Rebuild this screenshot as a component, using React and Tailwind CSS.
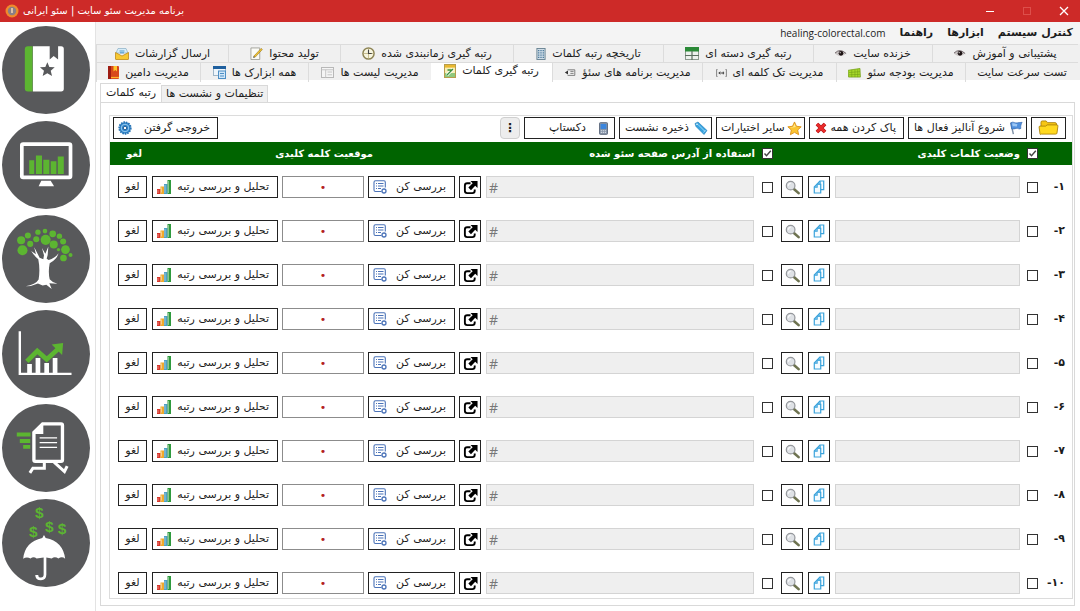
import { useState } from 'react';

const rows = ['۱', '۲', '۳', '۴', '۵', '۶', '۷', '۸', '۹', '۱۰'];

const FlagIcon = () => (
  <svg viewBox="0 0 16 16" className="size-[14px] shrink-0">
    <path d="M2 2l3 13" stroke="#7d8fa6" strokeWidth="1.6" />
    <path d="M2 2c3-2 5 1 8 0 2-.5 3 0 5-.5-1 2-2 4-1.500 7-2 1.500-3-.5-5.500 0-2 .5-3 1-5 .5z" fill="#4f8fdc" stroke="#2d62ad" strokeWidth=".7" />
    <path d="M3.500 3c2-1 4 1 6 .3l-.5 3c-2 .3-3-.5-4.700 0z" fill="#9cc7f5" />
  </svg>
);

const CrossIcon = () => (
  <svg viewBox="0 0 12 12" className="size-[12px] shrink-0">
    <path d="M2 2l8 8M10 2l-8 8" stroke="#a30f12" strokeWidth="3.800" />
    <path d="M2 2l8 8M10 2l-8 8" stroke="#ea2b2b" strokeWidth="2.600" />
  </svg>
);

const StarIcon = () => (
  <svg viewBox="0 0 16 16" className="size-[15px] shrink-0">
    <path d="M8 1l2.100 4.600 5 .6-3.700 3.400 1 5L8 12.100l-4.400 2.500 1-5L.9 6.200l5-.6z" fill="#fbc531" stroke="#d98b12" strokeWidth=".9" />
    <path d="M8 2.800l1.300 3.500-4.800 1L3 6.800l3.500-.5z" fill="#ffe88f" />
  </svg>
);

const TagIcon = () => (
  <svg viewBox="0 0 14 14" className="size-[14px] shrink-0">
    <path d="M1 2.500L4 1l9 8.500-3 4-8-8z" fill="#36a3e0" stroke="#1d78b5" strokeWidth=".6" />
    <path d="M4 3.500l7 7M9.500 11.500l2-2.500" stroke="#a9dcf7" strokeWidth=".9" />
    <circle cx="3" cy="3.300" r=".8" fill="#fff" />
  </svg>
);

const PhoneIcon = () => (
  <svg viewBox="0 0 10 14" className="h-[13px] w-[9px] shrink-0">
    <rect x=".5" y=".5" width="9" height="13" rx="1" fill="#8795a8" stroke="#566377" />
    <rect x="1.800" y="2" width="6.400" height="5.500" fill="#3c86dd" />
    <path d="M2 9.500h6M2 11.500h6" stroke="#dce3eb" strokeWidth="1" strokeDasharray="1.400 .8" />
  </svg>
);

const FolderIcon = () => (
  <svg viewBox="0 0 22 17" className="h-[16px] w-[21px] shrink-0">
    <path d="M3 4.500V2.500Q3 1 4.500 1h4L10 2.800h8q1.500 0 1.500 1.500V8H3z" fill="#f6c615" stroke="#a77c05" strokeWidth=".9" />
    <path d="M1 7.500q0-1 1-1h6l1.500-1.300H20q1.200 0 1 1.300l-1 7.500q-.2 1-1.500 1h-15Q2.200 16 2 15z" fill="#ffd91f" stroke="#a77c05" strokeWidth=".9" />
  </svg>
);

const GearIcon = () => (
  <svg viewBox="0 0 16 16" className="size-[14px] shrink-0">
    <circle cx="8" cy="8" r="6.500" fill="#2f86cc" stroke="#2773b4" strokeWidth="2.200" strokeDasharray="1.800 1" />
    <circle cx="8" cy="8" r="4.300" fill="none" stroke="#a7d3f2" strokeWidth="1" />
    <circle cx="8" cy="8" r="2" fill="#fff" stroke="#174f86" strokeWidth="1" />
  </svg>
);

const ChartIcon = () => (
  <svg viewBox="0 0 14 14" className="size-[14px] shrink-0">
    <rect x="0" y="9" width="3.500" height="5" fill="#d8352a" />
    <rect x="3.500" y="6.500" width="3.500" height="7.500" fill="#f0a92c" />
    <rect x="7" y="4" width="3.500" height="10" fill="#4e9fc4" />
    <rect x="10.500" y="0" width="3.500" height="14" fill="#2f9a3e" />
    <path d="M1 10v3M4.500 7.500v5M8 5v8M11.500 1v12" stroke="#fff" strokeOpacity=".55" strokeWidth=".8" />
  </svg>
);

const ListIcon = () => (
  <svg viewBox="0 0 14 14" className="size-[14px] shrink-0" fill="none" stroke="#4b73b8">
    <path d="M8.500 11.500H2.500Q1 11.500 1 10V2.200Q1 .8 2.500.8h8.500q1.300 0 1.300 1.400V7.500" strokeWidth="1.100" />
    <path d="M3 3.500h1M5 3.500h5.500M3 6h1M5 6h5.500M3 8.500h1M5 8.500h3" strokeWidth="1.100" />
    <circle cx="11" cy="11" r="2" strokeWidth="1.300" />
  </svg>
);

const ExternalIcon = () => (
  <svg viewBox="0 0 16 16" className="size-[15px] shrink-0">
    <path d="M8 3.500H4.500Q2 3.500 2 6v5.500Q2 14 4.500 14H10q2.500 0 2.500-2.500V10" fill="none" stroke="#000" strokeWidth="2" />
    <path d="M8 1h7.500v7.500L13 6.200 8.500 10.800 5.700 8l4.600-4.600z" />
  </svg>
);

const CopyIcon = () => (
  <svg viewBox="0 0 14 16" className="h-[14px] w-[12px] shrink-0" fill="#f4fbff" stroke="#3ba3dc" strokeWidth="1.400">
    <path d="M5 4.500L8 1h4.500v10H5z" />
    <path d="M1.500 8l3-3.200H9V15H1.500z" />
    <path d="M4.800 5v3.200H1.500M8.300 1.200v3.300H5.500" fill="none" />
  </svg>
);

const SearchIcon = () => (
  <svg viewBox="0 0 16 16" className="size-[15px] shrink-0">
    <path d="M9.500 9.500l5 4.500" stroke="#6e7350" strokeWidth="2.800" strokeLinecap="round" />
    <circle cx="6" cy="6" r="4.600" fill="#dfe2e6" stroke="#95989c" strokeWidth="1.300" />
    <path d="M3.500 6Q4 3.800 6 3.500" fill="none" stroke="#fff" strokeWidth="1.200" />
  </svg>
);

const EyeIcon = () => (
  <svg viewBox="0 0 14 10" className="h-[9px] w-[12px] shrink-0">
    <path d="M0 5Q5-1 13 5 7 10 2 6.500z" fill="#c9c4c4" />
    <path d="M0 4.500Q6-1.500 13 5" fill="none" stroke="#55494c" strokeWidth="1" />
    <circle cx="7" cy="4.800" r="2.700" fill="#1c1213" />
    <circle cx="6" cy="4" r=".7" fill="#fff" />
  </svg>
);

const SheetIcon = () => (
  <svg viewBox="0 0 14 13" className="h-[13px] w-[14px] shrink-0">
    <rect x=".5" y=".5" width="13" height="12" fill="#eef2ee" stroke="#8d9a8f" />
    <rect x="0" y="0" width="14" height="4.500" fill="#2b8a37" />
    <path d="M7 4v9M0 8.500h14" stroke="#5c7060" strokeWidth="1.200" />
  </svg>
);

const BuildingIcon = () => (
  <svg viewBox="0 0 11 13" className="h-[12px] w-[10px] shrink-0">
    <rect x="1" y=".5" width="9" height="12" fill="#cfdde8" stroke="#64808f" />
    <path d="M3 2v9M5.500 2v9M8 2v9" stroke="#3d6e92" strokeWidth="1.300" strokeDasharray="1.500 1" />
  </svg>
);

const ClockIcon = () => (
  <svg viewBox="0 0 14 14" className="size-[13px] shrink-0">
    <circle cx="7" cy="7" r="6" fill="#f7f5df" stroke="#8d8455" strokeWidth="1.600" />
    <path d="M7 1.500v11M1.500 7h11" stroke="#b7ab73" strokeWidth=".8" />
    <path d="M7 3v4h3.500" fill="none" stroke="#444" strokeWidth="1.200" />
  </svg>
);

const PencilIcon = () => (
  <svg viewBox="0 0 14 14" className="size-[13px] shrink-0">
    <path d="M1 1h9.500v12.500H1z" fill="#fbfbf6" stroke="#98988f" strokeWidth=".9" />
    <path d="M4 10L12 1.500l1.300 1.200L5.500 11z" fill="#f4c430" stroke="#8d6d12" strokeWidth=".6" />
    <path d="M3.200 11.500L4 10l1.500 1z" fill="#333" />
  </svg>
);

const MailIcon = () => (
  <svg viewBox="0 0 14 13" className="h-[13px] w-[14px] shrink-0">
    <path d="M1 6l2-4.500h8L13 6z" fill="#d6ecf8" stroke="#88aec4" strokeWidth=".7" />
    <path d="M.5 5.500L7 9l6.500-3.500V12q0 .5-.5.5H1q-.5 0-.5-.5z" fill="#f7c832" stroke="#c08c15" strokeWidth=".8" />
    <path d="M4.500 4h5M5 5.800h4" stroke="#4d9cd0" />
  </svg>
);

const MoneyIcon = () => (
  <svg viewBox="0 0 14 11" className="h-[10px] w-[13px] shrink-0">
    <path d="M0 2.500L13 .5l.5 9.500H.5z" fill="#a8d92a" stroke="#6f9c14" strokeWidth=".8" />
    <path d="M1 5l12-1M1 7.500l12-.5M4 2v8M7.500 1.500v8.500M10.500 1.500v8.500" stroke="#6f9c14" strokeWidth=".6" />
  </svg>
);

const PlugIcon = () => (
  <svg viewBox="0 0 12 9" className="h-[8px] w-[11px] shrink-0" fill="none" stroke="#777" strokeWidth="1">
    <path d="M1.500.5H.5v8h1M10.500.5h1v8h-1" />
    <path d="M3 4.500h6M4.500 3L3 4.500 4.500 6M8 3v3" stroke="#333" />
  </svg>
);

const FieldIcon = () => (
  <svg viewBox="0 0 13 10" className="h-[8px] w-[12px] shrink-0" fill="none" stroke="#666">
    <path d="M3.500 1h9v7h-9M7 3h4M7 5.500h4" />
    <path d="M0 4.500L4 2v5z" fill="#333" stroke="none" />
  </svg>
);

const NotesIcon = () => (
  <svg viewBox="0 0 12 14" className="h-[14px] w-[12px] shrink-0">
    <rect x=".5" y=".5" width="11" height="13" fill="#f8efb6" stroke="#b79d4b" />
    <rect x="1" y="1" width="10" height="2.600" fill="#eab830" />
    <path d="M1 9l10 0v4H1z" fill="#8fc97e" />
    <path d="M3 11l6-6" stroke="#fff" strokeWidth="3" />
    <path d="M3 11l6-6M3.500 6H8" stroke="#3c8f3a" strokeWidth="1.300" />
  </svg>
);

const WindowIcon = () => (
  <svg viewBox="0 0 14 12" className="h-[11px] w-[13px] shrink-0">
    <rect x=".5" y=".5" width="13" height="11" fill="#f5f5f5" stroke="#b3b3b3" />
    <path d="M.5 3h13M5 3v8.500M7 5.500h5M7 8.500h5" stroke="#c2c2c2" />
  </svg>
);

const ToolsIcon = () => (
  <svg viewBox="0 0 13 13" className="size-[13px] shrink-0">
    <rect x=".5" y=".5" width="12" height="9" fill="#eef5fb" stroke="#9fb6c8" />
    <rect x="0" y="0" width="13" height="3" fill="#1e5f9e" />
    <rect x="5.500" y="5" width="7" height="7.500" fill="#d2e7f8" stroke="#4d8ec4" />
    <path d="M7 7.500h4M7 10h4" stroke="#4d8ec4" />
  </svg>
);

const BookIcon = () => (
  <svg viewBox="0 0 11 13" className="h-[13px] w-[11px] shrink-0">
    <rect x="0" y="0" width="11" height="13" rx="1" fill="#d8481c" />
    <rect x="0" y="0" width="3" height="13" fill="#9d1c12" />
    <path d="M5.500 0h3.500v5.500L7.300 4 5.500 5.500z" fill="#ffc62b" />
    <path d="M3 11.500h8" stroke="#ffb52b" strokeWidth="1.200" />
  </svg>
);

const topTabs = [
  { label: 'پشتیبانی و آموزش', Icon: EyeIcon },
  { label: 'خزنده سایت', Icon: EyeIcon },
  { label: 'رتبه گیری دسته ای', Icon: SheetIcon },
  { label: 'تاریخچه رتبه کلمات', Icon: BuildingIcon },
  { label: 'رتبه گیری زمانبندی شده', Icon: ClockIcon },
  { label: 'تولید محتوا', Icon: PencilIcon },
  { label: 'ارسال گزارشات', Icon: MailIcon },
];

const bottomTabs = [
  { label: 'تست سرعت سایت' },
  { label: 'مدیریت بودجه سئو', Icon: MoneyIcon },
  { label: 'مدیریت تک کلمه ای', Icon: PlugIcon },
  { label: 'مدیریت برنامه های سئؤ', Icon: FieldIcon },
  { label: 'رتبه گیری کلمات', Icon: NotesIcon, active: true },
  { label: 'مدیریت لیست ها', Icon: WindowIcon },
  { label: 'همه ابزارک ها', Icon: ToolsIcon },
  { label: 'مدیریت دامین', Icon: BookIcon },
];

const sidebarItems = [
  {
    name: 'نشان شده ها',
    viewBox: '9 18 262 262',
    art: (
      <>
        <path d="M86 78h14v135H86q-9 0-9-9V87q0-9 9-9z" fill="#5cb531" />
        <path d="M101 78h50v40l12-11 13 11V78h9q8 0 8 8v119q0 8-8 8h-84z" fill="#fff" />
        <path d="M144 126l6 14 16 1-12 10 4 16-14-8-14 8 4-16-12-10 16-1z" fill="#58595b" />
      </>
    ),
  },
  {
    name: 'نمودارها',
    viewBox: '9 301 262 262',
    art: (
      <>
        <rect x="68" y="370" width="145" height="99" rx="4" fill="none" stroke="#fff" strokeWidth="11" />
        <path d="M126 479h28l10 16h-46z" fill="#fff" />
        <path d="M90 418h15v41H90zM110 404h18v55h-18zM132 416h18v43h-18zM154 421h17v38h-17zM175 407h18v52h-18z" fill="#5cb531" />
      </>
    ),
  },
  {
    name: 'رشد',
    viewBox: '9 15 262 262',
    art: (
      <>
        <path d="M79 227q30-4 39-20 5-30-1-60-10-8-21-25l14 10-5-21 16 31 11 5 2-12-6-22 10 17 9-21-2 25-3 11 6 4q20-6 29-20-4 17-26 30-5 27 0 47 7 9 23 14l-24-2 7 17-16-12-11 2-14-6q-16 8-37 8z" fill="#fff" />
        <g fill="#5cb531">
          <circle cx="66" cy="90" r="12" />
          <circle cx="86" cy="76" r="9" />
          <circle cx="70" cy="120" r="15" />
          <circle cx="93" cy="101" r="9" />
          <circle cx="111" cy="87" r="9" />
          <circle cx="116" cy="66" r="8" />
          <circle cx="137" cy="63" r="7" />
          <circle cx="139" cy="89" r="15" />
          <circle cx="160" cy="71" r="10" />
          <circle cx="180" cy="78" r="8" />
          <circle cx="163" cy="103" r="12" />
          <circle cx="191" cy="94" r="9" />
          <circle cx="198" cy="118" r="13" />
          <circle cx="177" cy="118" r="5" />
          <circle cx="192" cy="143" r="10" />
          <circle cx="213" cy="134" r="6" />
        </g>
      </>
    ),
  },
  {
    name: 'آمار',
    viewBox: '9 300 262 262',
    art: (
      <>
        <path d="M62 363v127h154" fill="none" stroke="#fff" strokeWidth="7" />
        <path d="M84 461h14v29H84zM109 443h14v47h-14zM135 458h14v32h-14zM160 443h14v47h-14z" fill="#fff" />
        <path d="M83 453l31-31 28 25 34-31" fill="none" stroke="#5cb531" strokeWidth="14" />
        <path d="M157 403l34-5-3 36z" fill="#5cb531" />
      </>
    ),
  },
  {
    name: 'گزارش سریع',
    viewBox: '9 13 262 262',
    art: (
      <>
        <path d="M130 72h55q4 0 4 4v104q0 4-4 4h-77q-4 0-4-4V98z" fill="none" stroke="#fff" strokeWidth="10" />
        <path d="M132 70v32h-30z" fill="#fff" />
        <path d="M121 114h52M121 128h52M121 142h52" stroke="#fff" strokeWidth="4" />
        <path d="M135 184v20h-34l-9 14M164 186l31 28 8-16" fill="none" stroke="#fff" strokeWidth="9" />
        <path d="M53 98h41v12H53zM62 117h31v12H62zM72 135h21v11H72z" fill="#5cb531" />
      </>
    ),
  },
  {
    name: 'درآمد',
    viewBox: '9 297 262 262',
    art: (
      <>
        <path d="M72 475q5-51 57-62l5-9 5 9q52 10 58 62-9-8-20-1-11-7-20 0l-16-3v51q0 17-16 17-17 0-17-16h9q0 8 8 8t8-9v-51l-21 3q-9-7-18 0-12-6-22 1z" fill="#fff" />
        <g
          direction="ltr"
          textAnchor="middle"
          fill="#5cb531"
          fontFamily="Liberation Sans, sans-serif"
          fontWeight="bold"
          fontSize="46"
        >
          <text x="120" y="355">$</text>
          <text x="150" y="395">$</text>
          <text x="188" y="402">$</text>
          <text x="102" y="409">$</text>
        </g>
      </>
    ),
  },
];

function TitleBar() {
  return (
    <header dir="ltr" className="flex h-[22px] items-center bg-[#cd2a28] pl-[5px] text-white">
      <svg viewBox="0 0 14 14" className="size-[14px]">
        <circle cx="7" cy="7" r="6.500" fill="#f08a2c" />
        <circle cx="7" cy="7" r="4.200" fill="#8a7f86" />
        <path d="M7 4v5" stroke="#f6d9b4" strokeWidth="1.500" />
      </svg>
      <span dir="rtl" className="ml-1 text-[10px] leading-4">
        برنامه مدیریت سئو سایت | سئو ایرانی
      </span>
      <div className="ml-auto flex items-center gap-[27px] pr-[11px]">
        <button aria-label="کوچک کردن">
          <svg viewBox="0 0 10 10" className="size-[10px]">
            <path d="M1 5.500h8" stroke="#fff" />
          </svg>
        </button>
        <button aria-label="بزرگ کردن" disabled>
          <svg viewBox="0 0 10 10" className="size-[10px]">
            <rect x="1.500" y="1.500" width="7" height="7" fill="none" stroke="#dd4f4b" />
          </svg>
        </button>
        <button aria-label="بستن">
          <svg viewBox="0 0 10 10" className="size-[10px]">
            <path d="M1 1l8 8M9 1L1 9" stroke="#fff" strokeWidth="1.300" />
          </svg>
        </button>
      </div>
    </header>
  );
}

function Sidebar() {
  return (
    <aside className="flex w-[95px] shrink-0 flex-col justify-between gap-1 pt-[4px] pr-[5px] pb-[24px] pl-[2px]">
      {sidebarItems.map((item) => (
        <button key={item.name} aria-label={item.name} className="size-[88px] overflow-hidden rounded-full bg-[#58595b]">
          <svg viewBox={item.viewBox} className="size-full">
            {item.art}
          </svg>
        </button>
      ))}
    </aside>
  );
}

function Tab({ label, Icon, active }) {
  return (
    <button
      role="tab"
      aria-selected={!!active}
      className={
        active
          ? 'flex items-center justify-center gap-[6px] bg-white pb-[3px] whitespace-nowrap'
          : 'flex items-center justify-center gap-[6px] border-l border-[#dcdcdc] whitespace-nowrap'
      }
    >
      {label}
      {Icon && <Icon />}
    </button>
  );
}

function ToolButton({ label, Icon, className }) {
  return (
    <button className={`flex h-[22px] items-center border border-[#222] bg-white whitespace-nowrap ${className}`}>
      {label}
      <Icon />
    </button>
  );
}

function Checkbox({ label, defaultChecked }) {
  const [checked, setChecked] = useState(!!defaultChecked);

  return (
    <span className="relative flex size-[11px] shrink-0">
      <input
        type="checkbox"
        aria-label={label}
        checked={checked}
        onChange={() => setChecked(!checked)}
        className="size-[11px] appearance-none border border-[#333] bg-white"
      />
      {checked && (
        <svg viewBox="0 0 11 11" className="pointer-events-none absolute inset-0 size-[11px]">
          <path d="M2.500 5.500l2 2.200 4.300-5" fill="none" stroke="#444" strokeWidth="1.400" />
        </svg>
      )}
    </span>
  );
}

function IconButton({ label, Icon }) {
  return (
    <button aria-label={label} className="flex size-[22px] shrink-0 items-center justify-center border border-[#222] bg-white">
      <Icon />
    </button>
  );
}

function KeywordRow({ number }) {
  return (
    <tr className="h-11 align-top last:h-[37px]">
      <td className="pt-[11px] pr-[7px] text-[11px] leading-[22px] font-bold whitespace-nowrap">{number}-</td>
      <td className="pt-[11px]">
        <div className="flex items-center gap-[5px] pr-[4px] pl-[4px]">
          <Checkbox label={`کلمه ${number}`} />
          <input
            aria-label={`کلمه کلیدی ${number}`}
            className="mr-[2px] h-[22px] w-0 flex-1 border border-[#d4d4d4] bg-[#efefef] px-1"
          />
          <IconButton label="کپی" Icon={CopyIcon} />
          <IconButton label="جستجو" Icon={SearchIcon} />
        </div>
      </td>
      <td className="pt-[11px]">
        <div className="flex items-center gap-[5px] pr-[4px] pl-[2px]">
          <Checkbox label={`آدرس صفحه ${number}`} />
          <input
            dir="ltr"
            aria-label={`آدرس ${number}`}
            defaultValue="#"
            className="mr-[3px] h-[22px] w-0 flex-1 border border-[#d4d4d4] bg-[#efefef] px-[2px] font-[family-name:'Open_Sans',sans-serif] text-[14px] text-[#777]"
          />
          <IconButton label="باز کردن" Icon={ExternalIcon} />
        </div>
      </td>
      <td className="pt-[11px]">
        <div className="flex gap-[4px] pr-[2px] pl-[2px]">
          <ToolButton label="بررسی کن" Icon={ListIcon} className="w-[87px] justify-between pr-[8px] pl-[4px]" />
          <input
            aria-label={`موقعیت ${number}`}
            defaultValue="•"
            className="h-[22px] w-0 flex-1 border border-[#8c8c8c] text-center text-[11px] text-[#b3201d]"
          />
          <ToolButton
            label="تحلیل و بررسی رتبه"
            Icon={ChartIcon}
            className="w-[126px] justify-between pr-[8px] pl-[4px]"
          />
        </div>
      </td>
      <td className="pt-[11px] pr-[3px]">
        <button className="h-[22px] w-[29px] border border-[#222]">لغو</button>
      </td>
    </tr>
  );
}

export default function App() {
  return (
    <div
      dir="rtl"
      className="flex min-h-screen flex-col bg-white font-[family-name:'DejaVu_Sans','Liberation_Sans',sans-serif] text-[11px] leading-4 text-[#1c1c1c]"
    >
      <TitleBar />
      <div className="flex flex-1 flex-row-reverse">
        <Sidebar />
        <main className="min-w-0 flex-1 border-l border-[#e3e3e3]">
          <nav className="flex h-[22px] items-center gap-[14px] bg-[#f4f4f4] pr-[7px] font-bold">
            <a href="#system">کنترل سیستم</a>
            <a href="#tools">ابزارها</a>
            <a href="#help">راهنما</a>
            <span dir="ltr" className="font-[family-name:'Open_Sans',sans-serif] text-[10px] font-normal">
              healing-colorectal.com
            </span>
          </nav>

          <div role="tablist" className="bg-[#f0f0f0] pr-[2px]">
            <div className="grid h-[18px] grid-cols-[146fr_119fr_150fr_150fr_173fr_112fr_132fr] border-t border-[#dcdcdc]">
              {topTabs.map((tab) => (
                <Tab key={tab.label} {...tab} />
              ))}
            </div>
            <div className="grid h-[18px] grid-cols-[113fr_129fr_134fr_150fr_121fr_123fr_108fr_104fr] border-t border-[#dcdcdc]">
              {bottomTabs.map((tab) => (
                <Tab key={tab.label} {...tab} />
              ))}
            </div>
          </div>

          <div className="pt-[3px] pr-[5px] pb-[5px] pl-[4px]">
            <div role="tablist" className="flex items-end justify-end">
              <button role="tab" aria-selected="false" className="h-[17px] border border-b-0 border-[#d9d9d9] bg-[#f0f0f0] px-1">
                تنظیمات و نشست ها
              </button>
              <button role="tab" aria-selected="true" className="h-[19px] border border-r-0 border-b-0 border-[#d9d9d9] px-[5px]">
                رتبه کلمات
              </button>
            </div>

            <div className="border border-[#d9d9d9] pt-[12px] pr-[1px] pb-[6px] pl-[8px]">
              <div className="border border-[#dcdcdc]">
                <div className="flex gap-[4px] pt-[1px] pr-[6px] pb-[3px] pl-[3px]">
                  <button aria-label="پوشه" className="flex h-[22px] w-[35px] items-center justify-center border border-[#222]">
                    <FolderIcon />
                  </button>
                  <ToolButton label="شروع آنالیز فعال ها" Icon={FlagIcon} className="w-[119px] flex-row-reverse justify-between pr-[3px] pl-[5px]" />
                  <ToolButton label="پاک کردن همه" Icon={CrossIcon} className="w-[95px] justify-between pr-[7px] pl-[5px]" />
                  <ToolButton label="سایر اختیارات" Icon={StarIcon} className="w-[89px] flex-row-reverse justify-between pr-[2px] pl-[4px]" />
                  <ToolButton label="ذخیره نشست" Icon={TagIcon} className="w-[93px] flex-row-reverse justify-between pr-[3px] pl-[5px]" />
                  <ToolButton label="دکستاپ" Icon={PhoneIcon} className="w-[91px] flex-row-reverse justify-between pr-[6px] pl-[24px]" />
                  <button aria-label="بیشتر" className="h-[22px] w-[20px] rounded border border-[#cfcfcf] bg-[#ededed] text-[12px] font-bold">
                    ⋮
                  </button>
                  <ToolButton label="خروجی گرفتن" Icon={GearIcon} className="mr-auto w-[105px] justify-between pr-[7px] pl-[4px]" />
                </div>

                <table className="w-full table-fixed border-collapse text-right">
                  <colgroup>
                    <col className="w-[30px]" />
                    <col className="w-[265px]" />
                    <col />
                    <col className="w-[307px]" />
                    <col className="w-[40px]" />
                  </colgroup>
                  <thead>
                    <tr className="h-[23px] bg-[#006400] text-[10px] text-white">
                      <th />
                      <th>
                        <div className="flex items-center gap-[7px] pr-[4px]">
                          <Checkbox label="انتخاب همه کلمات" defaultChecked />
                          وضعیت کلمات کلیدی
                        </div>
                      </th>
                      <th>
                        <div className="flex items-center gap-[7px] pr-[4px]">
                          <Checkbox label="انتخاب همه آدرس ها" defaultChecked />
                          استفاده از آدرس صفحه سئو شده
                        </div>
                      </th>
                      <th className="pr-[84px]">موقعیت کلمه کلیدی</th>
                      <th className="pr-[8px]">لغو</th>
                    </tr>
                  </thead>
                  <tbody>
                    {rows.map((number) => (
                      <KeywordRow key={number} number={number} />
                    ))}
                  </tbody>
                </table>
              </div>
            </div>
          </div>
        </main>
      </div>
    </div>
  );
}
